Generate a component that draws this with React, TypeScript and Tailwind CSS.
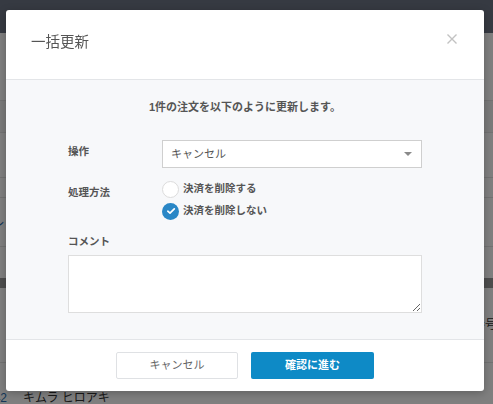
import React, { useState } from 'react';

const FONT = "font-['Liberation_Sans','Noto_Sans_CJK_JP',sans-serif]";

function BackgroundPage() {
  return (
    <div className="flex min-h-screen flex-col bg-white text-[#333]">
      <div className="h-[33px] bg-[#6c7484]" />
      <div className="h-[68px] border-b border-[#e4e4e4]" />
      <div className="h-[32px] border-b border-[#e4e4e4] bg-[#f4f4f4]" />
      <div className="h-[45px] border-b border-[#e4e4e4]" />
      <div className="h-[20px] border-b border-[#e4e4e4]" />
      <div className="flex h-[49px] items-center border-b border-[#e4e4e4]">
        <span className="-ml-2 text-[12px] text-[#2a6fb0]">ル</span>
      </div>
      <div className="h-[31px]" />
      <div className="h-[10px] bg-[#9a9a9a]" />
      <div className="flex h-[75px] items-center justify-end border-b border-[#e4e4e4]">
        <span className="-mr-1 text-[12px]">番号</span>
      </div>
      <div className="flex flex-col pt-[28px]">
        <div className="flex items-center gap-[16px] text-[12px] leading-[14px]">
          <span className="-ml-[13px] text-[#2a6fb0]">142</span>
          <span>キムラ ヒロアキ</span>
        </div>
        <span className="pl-[28px] text-[10px] leading-[12px]">小林 佑銀</span>
      </div>
    </div>
  );
}

function Radio({ checked, label, onClick }: { checked: boolean; label: string; onClick: () => void }) {
  return (
    <button type="button" onClick={onClick} className="flex h-[18px] items-center gap-[4px] text-left">
      {checked ? (
        <span className="flex h-[17px] w-[17px] items-center justify-center rounded-full bg-[#2a87c6]">
          <svg width="10" height="10" viewBox="0 0 10 10" fill="none">
            <path d="M1.8 5.2 L4 7.2 L8.3 2.8" stroke="white" strokeWidth="1.7" strokeLinecap="round" strokeLinejoin="round" />
          </svg>
        </span>
      ) : (
        <span className="h-[17px] w-[17px] rounded-full border border-[#dcdcdc] bg-white" />
      )}
      <span className="text-[10.5px] font-bold text-[#555]">{label}</span>
    </button>
  );
}

export default function App() {
  const [method, setMethod] = useState(1);

  return (
    <div className={`relative min-h-screen ${FONT}`}>
      <BackgroundPage />
      <div className="fixed inset-0 bg-black/50" />

      <div className="fixed inset-0 pl-[6px] pt-[10px]">
        <div className="flex w-[478px] flex-col overflow-hidden rounded-[3px] bg-white shadow-[0_2px_8px_rgba(0,0,0,0.25)]">
          {/* Header */}
          <div className="flex h-[70px] items-start justify-between border-b border-[#e3e5e8] pl-[25px] pr-[26px]">
            <h2 className="pt-[21px] text-[14.5px] leading-[22px] text-[#555]">一括更新</h2>
            <button type="button" className="mt-[23px] text-[#c2c2c2]" aria-label="閉じる">
              <svg width="12" height="12" viewBox="0 0 12 12">
                <path d="M1.5 1.5 L10.5 10.5 M10.5 1.5 L1.5 10.5" stroke="currentColor" strokeWidth="1.4" />
              </svg>
            </button>
          </div>

          {/* Body */}
          <div className="flex flex-col bg-[#f7f8fa] px-[62px] pb-[26px] pt-[19px]">
            <p className="text-center text-[11px] font-bold leading-[16px] text-[#555]">
              1件の注文を以下のように更新します。
            </p>

            <div className="mt-[25px] flex items-start">
              <span className="w-[94px] pt-[3px] text-[10.5px] font-bold leading-[16px] text-[#555]">操作</span>
              <div className="flex h-[28px] flex-1 items-center justify-between border border-[#cfcfcf] bg-white pl-[8px] pr-[9px]">
                <span className="text-[11px] text-[#555]">キャンセル</span>
                <span className="h-0 w-0 border-x-[4px] border-t-[4px] border-x-transparent border-t-[#8a8a8a]" />
              </div>
            </div>

            <div className="mt-[12px] flex items-start">
              <span className="w-[94px] pt-[4px] text-[10.5px] font-bold leading-[16px] text-[#555]">処理方法</span>
              <div className="flex flex-col gap-[4px]">
                <Radio checked={method === 0} label="決済を削除する" onClick={() => setMethod(0)} />
                <Radio checked={method === 1} label="決済を削除しない" onClick={() => setMethod(1)} />
              </div>
            </div>

            <span className="mt-[13px] text-[10.5px] font-bold leading-[16px] text-[#555]">コメント</span>
            <textarea className="mt-[6px] h-[58px] w-full resize-y border border-[#dedede] bg-white outline-none" />
          </div>

          {/* Footer */}
          <div className="flex justify-center gap-[13px] border-t border-[#e3e5e8] pb-[12px] pt-[12px]">
            <button type="button" className="h-[27px] w-[122px] rounded-[2px] border border-[#dfe1e4] bg-white text-[11px] text-[#666]">
              キャンセル
            </button>
            <button type="button" className="h-[27px] w-[123px] rounded-[2px] bg-[#0e8ac6] text-[11px] font-bold text-white">
              確認に進む
            </button>
          </div>
        </div>
      </div>
    </div>
  );
}
